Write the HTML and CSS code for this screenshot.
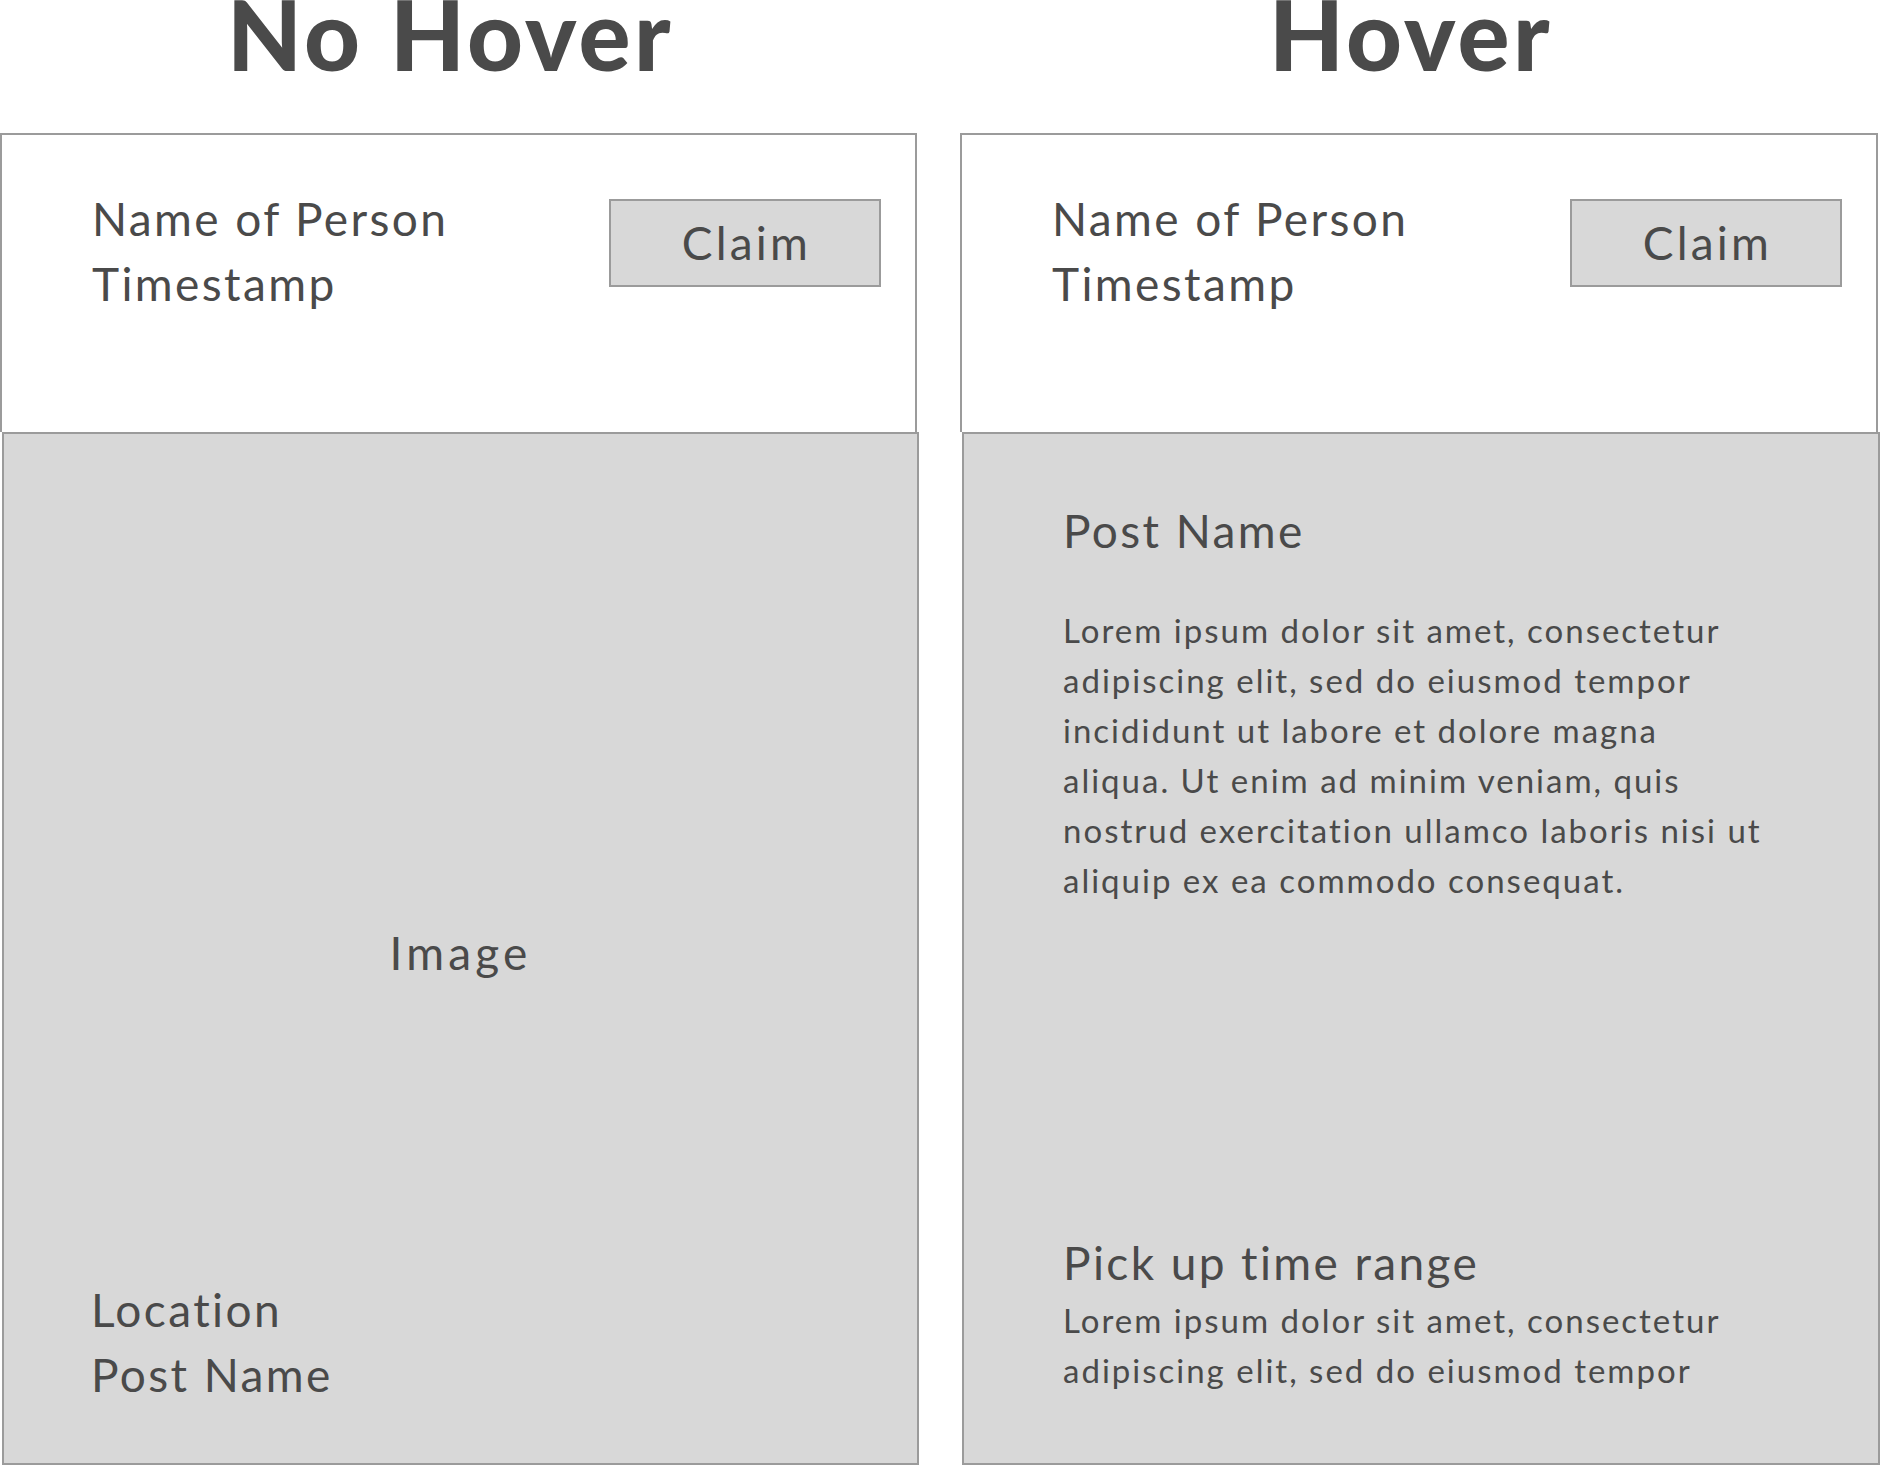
FILE: index.html
```html
<!DOCTYPE html>
<html lang="en">
<head>
<meta charset="utf-8">
<title>Post card – hover states</title>
<link rel="stylesheet" href="styles.css">
</head>
<body>
<main class="board">
  <section class="variant">
    <h1 class="variant-title">No Hover</h1>
    <article class="card">
      <header class="card-head">
        <div class="person">
          <div class="line">Name of Person</div>
          <div class="line">Timestamp</div>
        </div>
        <button class="claim" type="button">Claim</button>
      </header>
      <div class="card-body card-body--image">
        <div class="image-label">Image</div>
        <div class="meta">
          <div class="line">Location</div>
          <div class="line">Post Name</div>
        </div>
      </div>
    </article>
  </section>

  <section class="variant">
    <h1 class="variant-title">Hover</h1>
    <article class="card">
      <header class="card-head">
        <div class="person">
          <div class="line">Name of Person</div>
          <div class="line">Timestamp</div>
        </div>
        <button class="claim" type="button">Claim</button>
      </header>
      <div class="card-body card-body--details">
        <div class="details-top">
          <div class="line">Post Name</div>
          <p class="copy">Lorem ipsum dolor sit amet, consectetur<br>adipiscing elit, sed do eiusmod tempor<br>incididunt ut labore et dolore magna<br>aliqua. Ut enim ad minim veniam, quis<br>nostrud exercitation ullamco laboris nisi ut<br>aliquip ex ea commodo consequat.</p>
        </div>
        <div class="details-bottom">
          <div class="line">Pick up time range</div>
          <p class="copy">Lorem ipsum dolor sit amet, consectetur<br>adipiscing elit, sed do eiusmod tempor</p>
        </div>
      </div>
    </article>
  </section>
</main>
</body>
</html>
```

FILE: styles.css
```css
html, body {
  margin: 0;
  padding: 0;
  background: #ffffff;
}

body {
  font-family: Lato, "Liberation Sans", sans-serif;
  color: #4a4a4a;
  overflow: hidden;
}

.board {
  display: grid;
  grid-template-columns: 917px 918px;
  column-gap: 43px;
}

.variant {
  display: flex;
  flex-direction: column;
}

.variant-title {
  margin: 0 0 66px;
  padding-right: 16px;
  height: 67px;
  font-size: 97px;
  line-height: 67px;
  font-weight: 900;
  letter-spacing: 3.5px;
  text-align: center;
  white-space: nowrap;
}

.card {
  display: flex;
  flex-direction: column;
}

.line {
  font-size: 46px;
  line-height: 65px;
  letter-spacing: 2.4px;
  white-space: nowrap;
}

.card-head {
  box-sizing: border-box;
  height: 299px;
  border: 2px solid #9b9b9b;
  border-bottom: 0;
  padding: 51px 34px 0 90px;
  display: flex;
  justify-content: space-between;
  align-items: flex-start;
}

.claim {
  box-sizing: border-box;
  width: 272px;
  height: 88px;
  margin-top: 13px;
  border: 2px solid #9b9b9b;
  background: #d8d8d8;
  color: #4a4a4a;
  font-family: Lato, "Liberation Sans", sans-serif;
  font-size: 46px;
  letter-spacing: 3.2px;
  padding: 0 0 2px 3px;
  cursor: pointer;
}

.card-body {
  box-sizing: border-box;
  height: 1033px;
  margin: 0 -2px 0 2px;
  border: 2px solid #9b9b9b;
  background: #d8d8d8;
}

.card-body--image {
  display: grid;
  grid-template-rows: 1fr auto 1fr;
  padding-left: 87px;
}

.image-label {
  grid-row: 2;
  justify-self: center;
  margin-left: -87px;
  font-size: 46px;
  line-height: 65px;
  letter-spacing: 4.2px;
  position: relative;
  top: 4px;
}

.meta {
  grid-row: 3;
  align-self: end;
  margin-bottom: 56px;
}

.card-body--details {
  display: flex;
  flex-direction: column;
  justify-content: space-between;
  padding: 64px 0 68px 99px;
}

.copy {
  margin: 0;
  font-size: 33px;
  line-height: 50px;
  letter-spacing: 2px;
  white-space: nowrap;
}

.details-top .copy {
  margin-top: 42px;
}
```
